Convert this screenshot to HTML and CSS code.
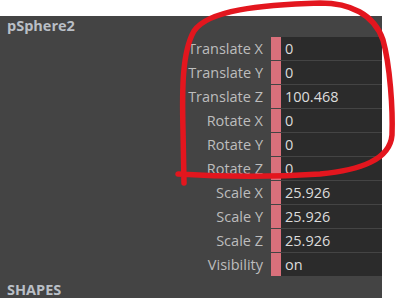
FILE: index.html
```html
<!DOCTYPE html>
<html lang="en">
<head>
    <meta charset="UTF-8">
    <title>pSphere2</title>
    <link rel="stylesheet" href="styles.css">
</head>
<body>
    <div class="panel">
        <div class="title">pSphere2</div>
        <div class="attrs">
            <div class="row"><span class="label">Translate X</span><span class="key"></span><span class="field">0</span></div>
            <div class="row"><span class="label">Translate Y</span><span class="key"></span><span class="field">0</span></div>
            <div class="row"><span class="label">Translate Z</span><span class="key"></span><span class="field">100.468</span></div>
            <div class="row"><span class="label">Rotate X</span><span class="key"></span><span class="field">0</span></div>
            <div class="row"><span class="label">Rotate Y</span><span class="key"></span><span class="field">0</span></div>
            <div class="row"><span class="label">Rotate Z</span><span class="key"></span><span class="field">0</span></div>
            <div class="row"><span class="label">Scale X</span><span class="key"></span><span class="field">25.926</span></div>
            <div class="row"><span class="label">Scale Y</span><span class="key"></span><span class="field">25.926</span></div>
            <div class="row"><span class="label">Scale Z</span><span class="key"></span><span class="field">25.926</span></div>
            <div class="row"><span class="label">Visibility</span><span class="key"></span><span class="field">on</span></div>
        </div>
        <div class="section">SHAPES</div>
    </div>

    <!-- red hand-drawn marking over the translate/rotate block -->
    <svg class="mark" width="397" height="298" viewBox="0 0 397 298">
        <path d="M184,183 L183,130 C182,90 182,52 194,31 C208,10 260,5 320,3 C350,3 374,14 383,40 C390,65 393,110 392,135 C390,160 360,170 320,174 C260,178 210,176 178,174"
              fill="none" stroke="#e3161e" stroke-width="5.5" stroke-linecap="round" stroke-linejoin="round"/>
    </svg>
</body>
</html>
```

FILE: styles.css
```css
* {
    padding: 0;
    margin: 0;
    box-sizing: border-box;
}
body {
    background: #fff;
    font-family: "Open Sans", "Noto Sans", sans-serif;
    position: relative;
    height: 298px;
    overflow: hidden;
}
.panel {
    margin-top: 16px;
    width: 382px;
    height: 282px;
    background: #444;
}
.title {
    height: 21px;
    padding: 1px 7px 0;
    font-size: 14.5px;
    font-weight: bold;
    color: #b9bfc6;
    line-height: 18px;
}
.attrs {
    display: flex;
    flex-direction: column;
    gap: 1px;
}
.row {
    display: flex;
    height: 23px;
    align-items: stretch;
    font-size: 14.5px;
    line-height: 24px;
}
.row .label {
    width: 271px;
    padding-right: 8px;
    text-align: right;
    color: #bdbdbd;
}
.row .key {
    width: 10px;
    background: #d9707b;
}
.row .field {
    flex: 1;
    background: #2b2b2b;
    padding-left: 4px;
    color: #dcdcdc;
}
.section {
    padding: 5px 7px 0;
    font-size: 14.5px;
    font-weight: bold;
    color: #b9bfc6;
    line-height: 18px;
}
.mark {
    position: absolute;
    left: 0;
    top: 0;
}
```
